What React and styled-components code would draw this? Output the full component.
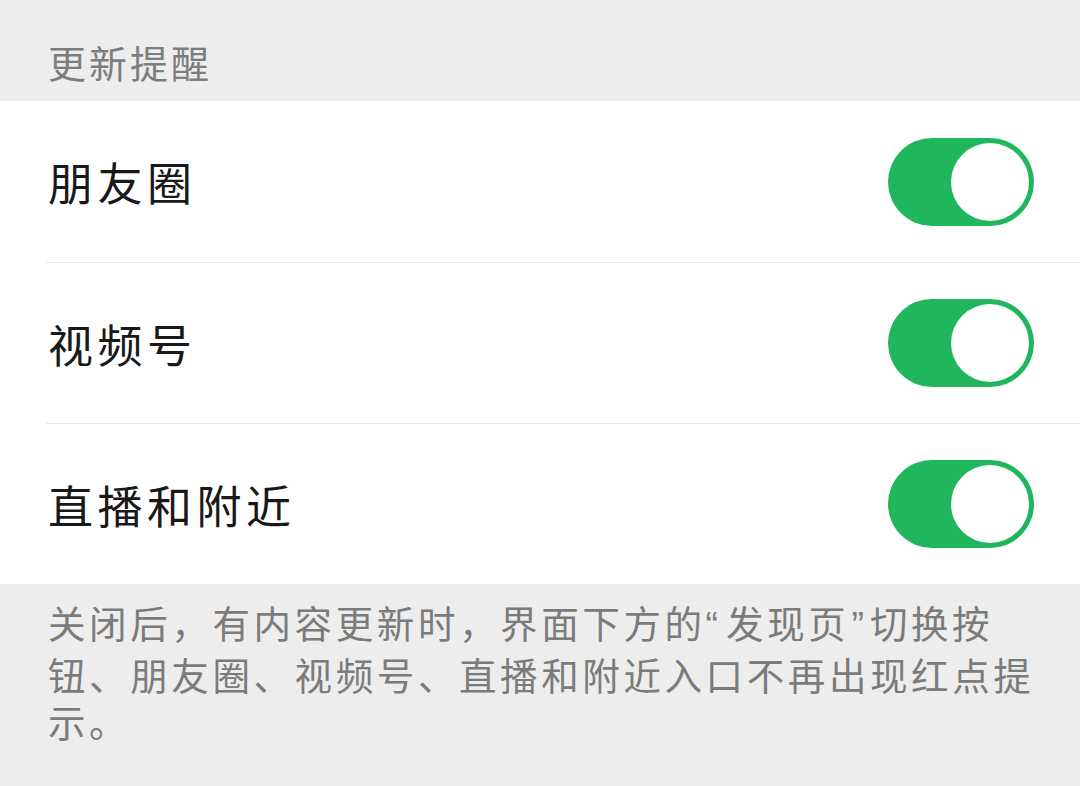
import React from "react";
import styled, { createGlobalStyle } from "styled-components";

const GlobalStyle = createGlobalStyle`
  html, body {
    margin: 0;
    padding: 0;
    background: #ededed;
  }
  body {
    font-family: "Noto Sans CJK SC", "Noto Sans", sans-serif;
  }
`;

const Page = styled.div`
  width: 1080px;
  height: 786px;
  background: #ededed;
  display: flex;
  flex-direction: column;
  overflow: hidden;
`;

const SectionTitle = styled.div`
  height: 101px;
  box-sizing: border-box;
  padding: 22px 48px 0;
  display: flex;
  align-items: center;
  font-size: 38px;
  letter-spacing: 3px;
  color: #7d7d7d;
`;

const List = styled.div`
  background: #ffffff;
  display: flex;
  flex-direction: column;
`;

const Row = styled.div`
  height: 161px;
  box-sizing: border-box;
  margin-left: 46px;
  padding: 0 46px 0 2px;
  display: flex;
  align-items: center;
  justify-content: space-between;
  border-top: ${(p) => (p.$first ? "none" : "1.5px solid #e9e9e9")};
`;

const Label = styled.span`
  font-size: 45px;
  letter-spacing: 4.5px;
  color: #191919;
`;

const Switch = styled.div`
  width: 146px;
  height: 88px;
  box-sizing: border-box;
  padding: 5px;
  border-radius: 44px;
  background: ${(p) => (p.$on ? "#1fb65c" : "#e5e5e5")};
  display: flex;
  align-items: center;
  justify-content: ${(p) => (p.$on ? "flex-end" : "flex-start")};
`;

const Knob = styled.div`
  width: 78px;
  height: 78px;
  border-radius: 50%;
  background: #ffffff;
`;

const Note = styled.p`
  margin: 0;
  padding: 14px 30px 0 48px;
  font-size: 37.5px;
  line-height: 47.5px;
  letter-spacing: 3.6px;
  color: #7b7b7b;
`;

const Quote = styled.span`
  font-family: "Liberation Sans", sans-serif;
  letter-spacing: 0;
  padding: ${(p) => (p.$open ? "0 8px 0 0" : "0 6px 0 2px")};
`;

const items = ["朋友圈", "视频号", "直播和附近"];

export default function App() {
  return (
    <Page>
      <GlobalStyle />
      <SectionTitle>更新提醒</SectionTitle>
      <List>
        {items.map((name, i) => (
          <Row key={name} $first={i === 0}>
            <Label>{name}</Label>
            <Switch $on>
              <Knob />
            </Switch>
          </Row>
        ))}
      </List>
      <Note>
        关闭后，有内容更新时，界面下方的<Quote $open>“</Quote>发现页<Quote>”</Quote>切换按钮、朋友圈、视频号、直播和附近入口不再出现红点提示。
      </Note>
    </Page>
  );
}
